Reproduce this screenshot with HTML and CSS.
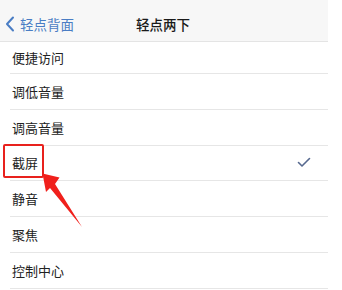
FILE: index.html
```html
<!DOCTYPE html>
<html lang="zh">
<head>
<meta charset="utf-8">
<link rel="stylesheet" href="styles.css">
</head>
<body>
<div class="screen">
  <header class="nav">
    <div class="back">
      <svg class="chev" width="10" height="16" viewBox="0 0 10 16"><path d="M8 1.5 L2 8 L8 14.5" fill="none" stroke="#4a7dc4" stroke-width="2" stroke-linecap="round" stroke-linejoin="round"/></svg>
      <span>轻点背面</span>
    </div>
    <div class="title">轻点两下</div>
    <div></div>
  </header>
  <ul class="list">
    <li class="row first"><span>便捷访问</span></li>
    <li class="row"><span>调低音量</span></li>
    <li class="row"><span>调高音量</span></li>
    <li class="row"><span class="boxed">截屏</span>
      <svg class="check" width="14" height="11" viewBox="0 0 14 11"><path d="M1.5 5.5 L5 9 L12.5 1.5" fill="none" stroke="#56698f" stroke-width="1.6" stroke-linecap="round" stroke-linejoin="round"/></svg>
    </li>
    <li class="row"><span>静音</span></li>
    <li class="row"><span>聚焦</span></li>
    <li class="row"><span>控制中心</span></li>
  </ul>
  <svg class="arrow" width="342" height="290" viewBox="0 0 342 290"><polygon points="42.5,173.5 59.5,177.5 55,184 82,227 50,188 46,192" fill="#f0201c"/></svg>
</div>
</body>
</html>
```
FILE: styles.css
```css
* { box-sizing: border-box; }
html, body { margin: 0; padding: 0; background: #fff; }
body {
  width: 342px;
  height: 290px;
  overflow: hidden;
  font-family: "Noto Sans CJK SC", "Noto Sans", sans-serif;
  color: #222;
}
.screen {
  position: relative;
  width: 328px;
  height: 290px;
  background: #fff;
}
.nav {
  height: 42px;
  background: #f7f7f7;
  border-bottom: 1px solid #e4e4e4;
  display: grid;
  grid-template-columns: 1fr auto 1fr;
  align-items: center;
}
.back {
  display: flex;
  align-items: center;
  gap: 5px;
  padding-left: 5px;
  color: #4a7dc4;
  font-size: 13.5px;
  margin-top: 6px;
}
.title {
  font-size: 13.5px;
  font-weight: 500;
  color: #1a1a1a;
  margin-top: 6px;
  margin-right: 2px;
}
.list {
  list-style: none;
  margin: 0;
  padding: 0;
}
.row {
  position: relative;
  height: 35.8px;
  margin-left: 10px;
  padding-left: 2px;
  border-bottom: 1px solid #e6e6e6;
  display: flex;
  align-items: center;
  justify-content: space-between;
  font-size: 13px;
}
.row.first { height: 32px; }
.boxed {
  position: relative;
}
.boxed::before {
  content: "";
  position: absolute;
  left: -9px;
  top: -9px;
  width: 37px;
  height: 30px;
  border: 2px solid #e8211d;
  border-radius: 2px;
}
.check { margin-right: 17px; }
.arrow {
  position: absolute;
  left: 0;
  top: 0;
  pointer-events: none;
}
```
